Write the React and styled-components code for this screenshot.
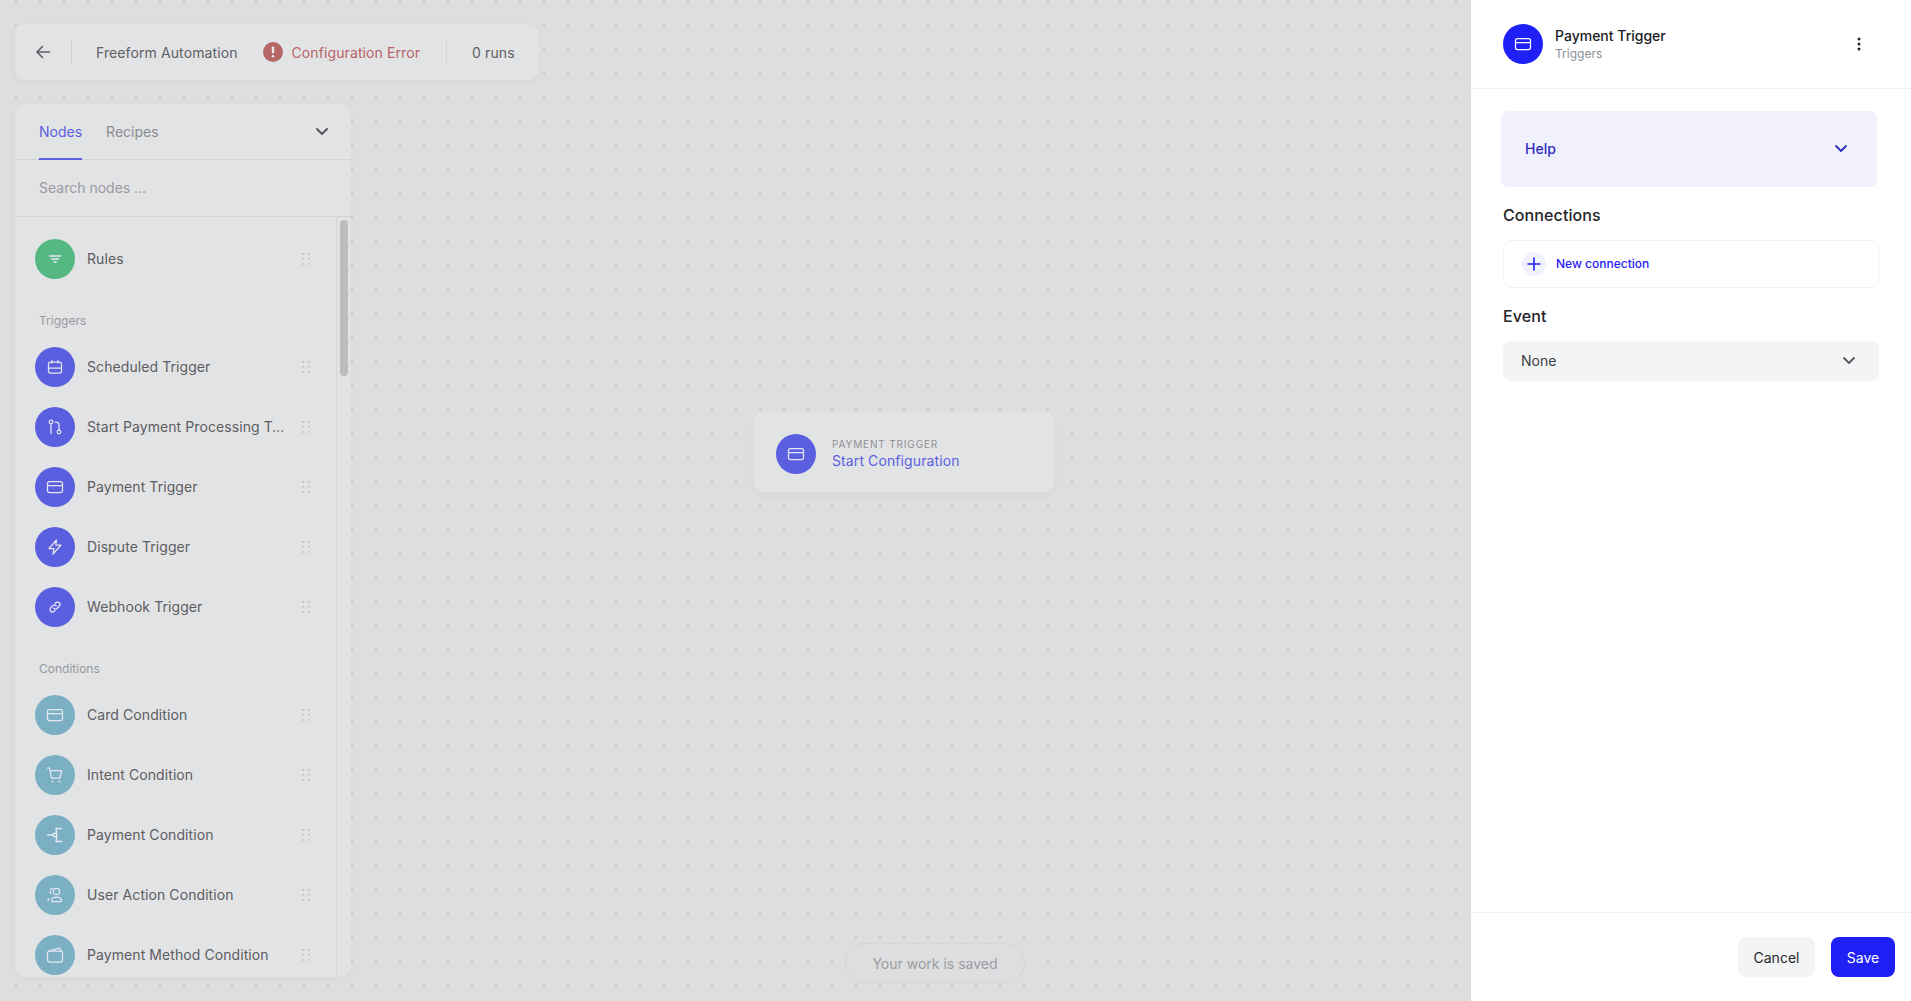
import React from "react";
import styled, { createGlobalStyle } from "styled-components";

const Global = createGlobalStyle`
  html, body { margin: 0; padding: 0; height: 100%; overflow: hidden; }
  body { font-family: Inter, "Liberation Sans", sans-serif; -webkit-font-smoothing: antialiased; }
  #root { height: 100%; }
  * { box-sizing: border-box; }
`;

const Page = styled.div`
  display: flex;
  width: 1911px;
  height: 1001px;
  overflow: hidden;
`;
const Canvas = styled.main`
  position: relative;
  width: 1471px;
  height: 100%;
  padding: 24px 15px;
  display: flex;
  flex-direction: column;
  align-items: flex-start;
  gap: 24px;
  background-color: #dddee0;
  background-image: radial-gradient(circle at center, #c6c7ca 0.8px, transparent 1.1px);
  background-size: 24px 24px;
  background-position: 4px -11px;
`;
const TopBar = styled.header`
  display: flex;
  align-items: center;
  height: 56px;
  width: 524px;
  padding: 0 0 0 18px;
  background: #e2e3e5;
  border-radius: 10px;
  box-shadow: 0 2px 8px rgba(0, 0, 0, 0.03);
  font-size: 14px;
  letter-spacing: 0.1px;
  white-space: nowrap;
  color: #5f6064;
`;
const BackButton = styled.span`
  display: flex;
  width: 20px;
  color: #5f6064;
`;
const VDivider = styled.span`
  flex: none;
  width: 1px;
  height: 24px;
  background: #d2d3d7;
  margin: ${(p) => p.$margin};
`;
const ErrorDot = styled.span`
  display: flex;
  align-items: center;
  justify-content: center;
  flex: none;
  width: 20px;
  height: 20px;
  border-radius: 50%;
  background: #b56767;
  color: #e8e8e8;
  margin: 0 9px 0 25px;
`;
const ErrorText = styled.span`
  color: #b96464;
`;
const Panel = styled.section`
  display: flex;
  flex-direction: column;
  width: 336px;
  height: 873px;
  background: #e2e3e5;
  border-radius: 10px;
  overflow: hidden;
  box-shadow: 0 2px 8px rgba(0, 0, 0, 0.03);
`;
const Tabs = styled.div`
  display: flex;
  align-items: stretch;
  height: 56px;
  flex: none;
  padding: 0 22px 0 24px;
  gap: 24px;
  border-bottom: 1px solid #d2d3d7;
`;
const Tab = styled.span`
  display: flex;
  align-items: center;
  font-size: 14px;
  height: 56px;
  color: ${(p) => (p.$active ? "#5a5fdf" : "#8a8b90")};
  border-bottom: 2px solid ${(p) => (p.$active ? "#5a5fdf" : "transparent")};
`;
const TabChevron = styled.span`
  display: flex;
  align-items: center;
  margin-left: auto;
  color: #56575b;
`;
const Search = styled.div`
  display: flex;
  align-items: center;
  height: 57px;
  flex: none;
  padding: 0 0 2px 24px;
  font-size: 14px;
  color: #999a9e;
  border-bottom: 1px solid #d2d3d7;
`;
const Body = styled.div`
  display: flex;
  flex: 1;
  min-height: 0;
`;
const List = styled.div`
  flex: 1;
  min-width: 0;
  padding-top: 12px;
  overflow: hidden;
`;
const Track = styled.div`
  flex: none;
  width: 15px;
  padding: 3px 3px 0 3px;
  border-left: 1px solid #d6d7da;
`;
const Thumb = styled.div`
  width: 8px;
  height: 156px;
  border-radius: 4px;
  background: #bcbdbf;
`;
const Row = styled.div`
  display: flex;
  align-items: center;
  height: 60px;
  padding-left: 20px;
`;
const Circle = styled.span`
  display: flex;
  align-items: center;
  justify-content: center;
  flex: none;
  width: 40px;
  height: 40px;
  border-radius: 50%;
  background: ${(p) => p.$color};
  color: ${(p) => p.$ink || "#e6e7f2"};
`;
const RowName = styled.span`
  width: 200px;
  margin-left: 12px;
  font-size: 14px;
  line-height: 20px;
  letter-spacing: 0.08px;
  color: #5c5d61;
  white-space: nowrap;
  overflow: hidden;
  text-overflow: ellipsis;
`;
const Handle = styled.span`
  display: flex;
  margin-left: 15px;
  color: #c3c4c7;
`;
const GroupLabel = styled.div`
  margin: 24px 0 8px 24px;
  height: 16px;
  font-size: 12px;
  line-height: 16px;
  color: #98999d;
`;
const Node = styled.div`
  position: absolute;
  left: 754px;
  top: 412px;
  display: flex;
  align-items: center;
  width: 300px;
  height: 80px;
  padding: 4px 0 0 22px;
  gap: 16px;
  border-radius: 10px;
  background: #e2e3e5;
  box-shadow: 0 4px 10px rgba(0, 0, 0, 0.03);
`;
const NodeText = styled.div`
  display: flex;
  flex-direction: column;
`;
const NodeLabel = styled.span`
  font-size: 10px;
  line-height: 14px;
  letter-spacing: 0.85px;
  color: #8e8f93;
  text-transform: uppercase;
`;
const NodeAction = styled.span`
  font-size: 14px;
  line-height: 20px;
  letter-spacing: 0.1px;
  color: #5a5fdf;
`;
const SavedPill = styled.div`
  position: absolute;
  left: 845px;
  top: 943px;
  display: flex;
  align-items: center;
  justify-content: center;
  width: 180px;
  height: 40px;
  border: 1px solid #d4d5d8;
  border-radius: 20px;
  background: #dddee0;
  font-size: 14px;
  color: #9b9ca1;
`;
const Side = styled.aside`
  display: flex;
  flex-direction: column;
  width: 440px;
  height: 100%;
  background: #fff;
`;
const SideHeader = styled.div`
  display: flex;
  align-items: center;
  flex: none;
  height: 89px;
  padding: 0 50px 0 32px;
  border-bottom: 1px solid #f0f0f2;
`;
const HeaderText = styled.div`
  display: flex;
  flex-direction: column;
  margin-left: 12px;
`;
const Title = styled.span`
  font-size: 14px;
  font-weight: 500;
  line-height: 20px;
  color: #1b1b1f;
`;
const Sub = styled.span`
  font-size: 12px;
  line-height: 16px;
  color: #8d9097;
`;
const Kebab = styled.span`
  display: flex;
  margin-left: auto;
  color: #26262a;
`;
const SideBody = styled.div`
  flex: 1;
  padding: 22px 32px 0;
`;
const Help = styled.div`
  display: flex;
  align-items: center;
  justify-content: space-between;
  width: 376px;
  height: 76px;
  margin-left: -2px;
  padding: 0 29px 2px 24px;
  border-radius: 8px;
  background: #f1f1fd;
  font-size: 14px;
  font-weight: 500;
  color: #2d2dbd;
`;
const SectionLabel = styled.div`
  font-size: 16px;
  font-weight: 500;
  line-height: 24px;
  letter-spacing: 0.1px;
  color: #232327;
  margin: ${(p) => p.$margin};
`;
const ConnectionBox = styled.div`
  display: flex;
  align-items: center;
  height: 48px;
  padding: 0 0 1px 18px;
  gap: 10px;
  border: 1px solid #f1f1fd;
  border-radius: 8px;
  font-size: 12px;
  font-weight: 500;
  color: #1f20f5;
`;
const PlusDot = styled.span`
  display: flex;
  align-items: center;
  justify-content: center;
  width: 24px;
  height: 24px;
  border-radius: 50%;
  background: #f1f1fd;
`;
const Select = styled.div`
  display: flex;
  align-items: center;
  justify-content: space-between;
  height: 40px;
  padding: 0 23px 2px 18px;
  border-radius: 8px;
  background: #f3f4f6;
  font-size: 14px;
  color: #3c3d42;
`;
const SelectChevron = styled.span`
  display: flex;
  color: #56575c;
`;
const Footer = styled.div`
  display: flex;
  justify-content: flex-end;
  flex: none;
  height: 89px;
  padding: 24px 16px 0 0;
  gap: 16px;
  border-top: 1px solid #f0f0f2;
`;
const Button = styled.button`
  height: 40px;
  padding: 0;
  width: ${(p) => p.$width}px;
  border: 0;
  border-radius: 8px;
  font: 400 14px Inter, "Liberation Sans", sans-serif;
  background: ${(p) => (p.$primary ? "#1f20f5" : "#f3f4f6")};
  color: ${(p) => (p.$primary ? "#fff" : "#27272b")};
`;

const Ico = ({ children, size = 20, box = 20, w = 1.25 }) => (
  <svg width={size} height={size} viewBox={`0 0 ${box} ${box}`} fill="none" stroke="currentColor" strokeWidth={w} strokeLinecap="round" strokeLinejoin="round">
    {children}
  </svg>
);
const CardIcon = () => (
  <Ico>
    <rect x="2.5" y="4.5" width="15" height="11" rx="2" />
    <path d="M2.5 8.5h15" />
  </Ico>
);
const FilterIcon = () => (
  <Ico w={1.4}>
    <path d="M4.5 7h11M6.5 10h7M8.8 13h2.4" />
  </Ico>
);
const CalendarIcon = () => (
  <Ico>
    <rect x="3.5" y="5" width="13" height="11" rx="2" />
    <path d="M3.5 11h13M7 3.5v2.5M13 3.5v2.5" />
  </Ico>
);
const FlowIcon = () => (
  <Ico>
    <circle cx="6" cy="5" r="1.8" />
    <path d="M6 6.8V16.5" />
    <circle cx="14" cy="15" r="1.8" />
    <path d="M14 13.2V8a3 3 0 0 0-3-3h-1" />
  </Ico>
);
const ZapIcon = () => (
  <Ico>
    <path d="M11.5 3 4 11.5h5l-1 5.5 8-9h-5.2z" />
  </Ico>
);
const LinkIcon = () => (
  <Ico>
    <path d="M8.8 11.2a2.4 2.4 0 0 0 3.4 0l2-2a2.4 2.4 0 0 0-3.4-3.4l-.7.7" />
    <path d="M11.2 8.8a2.4 2.4 0 0 0-3.4 0l-2 2a2.4 2.4 0 0 0 3.4 3.4l.7-.7" />
  </Ico>
);
const CartIcon = () => (
  <Ico>
    <path d="M2.5 3h2l2 10h8.5l1.7-7.5H5" />
    <path d="M7.5 16.5h.01M14.5 16.5h.01" strokeWidth="1.8" />
  </Ico>
);
const BranchIcon = () => (
  <Ico w={1.4}>
    <circle cx="10" cy="10" r="1.8" />
    <path d="M2.5 10h5.7M11 3.5h5.5M11 3.5l.7 4.9M11 16.5h5.5M11 16.5l.7-4.9" />
  </Ico>
);
const UserIcon = () => (
  <Ico>
    <circle cx="11.5" cy="6.5" r="3.2" />
    <path d="M6.5 15.6c0-2.4 2.2-3.6 5-3.6s5 1.2 5 3.6c0 .6-.4 1-1 1h-8c-.6 0-1-.4-1-1z" />
    <path d="M7.6 3.4C5.8 3.7 4.6 5.2 5 7c.2.8.6 1.4 1.2 1.8M3 16c0-1.2.5-2.2 1.4-3" strokeDasharray="2.6 1.4" />
  </Ico>
);
const WalletIcon = () => (
  <Ico>
    <rect x="2.5" y="6" width="15" height="11" rx="2.2" />
    <path d="M4 6 13.5 3.3c1.2-.3 2 .3 2.2 1.5L16 6" />
  </Ico>
);
const DragIcon = () => (
  <svg width="8" height="12" viewBox="0 0 8 12" fill="currentColor">
    {[0, 5, 10].map((y) => (
      <React.Fragment key={y}>
        <rect x="0" y={y} width="2" height="2" rx="1" />
        <rect x="6" y={y} width="2" height="2" rx="1" />
      </React.Fragment>
    ))}
  </svg>
);
const Chevron = ({ w = 1.8 }) => (
  <svg width="14" height="9" viewBox="0 0 14 9" fill="none" stroke="currentColor" strokeWidth={w} strokeLinecap="round" strokeLinejoin="round">
    <path d="M2 2l5 5 5-5" />
  </svg>
);

const PURPLE = "#5a5fdf";
const TEAL = "#7bafc4";
const triggers = [
  ["Scheduled Trigger", CalendarIcon],
  ["Start Payment Processing Trigger", FlowIcon],
  ["Payment Trigger", CardIcon],
  ["Dispute Trigger", ZapIcon],
  ["Webhook Trigger", LinkIcon],
];
const conditions = [
  ["Card Condition", CardIcon],
  ["Intent Condition", CartIcon],
  ["Payment Condition", BranchIcon],
  ["User Action Condition", UserIcon],
  ["Payment Method Condition", WalletIcon],
];

const NodeRow = ({ name, color, Icon }) => (
  <Row>
    <Circle $color={color}>
      <Icon />
    </Circle>
    <RowName>{name}</RowName>
    <Handle>
      <DragIcon />
    </Handle>
  </Row>
);

export default function App() {
  return (
    <Page>
      <Global />
      <Canvas>
        <TopBar>
          <BackButton>
            <svg width="20" height="20" viewBox="0 0 20 20" fill="none" stroke="currentColor" strokeWidth="1.6" strokeLinecap="round" strokeLinejoin="round">
              <path d="M16.5 10h-12M9.5 4.5 4 10l5.5 5.5" />
            </svg>
          </BackButton>
          <VDivider $margin="0 24px 0 18px" />
          <span>Freeform Automation</span>
          <ErrorDot>
            <svg width="4" height="12" viewBox="0 0 4 12" fill="currentColor">
              <rect x="0.8" y="0.5" width="2.4" height="7" rx="1" />
              <circle cx="2" cy="10.2" r="1.3" />
            </svg>
          </ErrorDot>
          <ErrorText>Configuration Error</ErrorText>
          <VDivider $margin="0 25px 0 26px" />
          <span>0 runs</span>
        </TopBar>
        <Panel>
          <Tabs>
            <Tab $active>Nodes</Tab>
            <Tab>Recipes</Tab>
            <TabChevron>
              <Chevron w={2} />
            </TabChevron>
          </Tabs>
          <Search>Search nodes ...</Search>
          <Body>
            <List>
              <NodeRow name="Rules" color="#55b882" Icon={FilterIcon} />
              <GroupLabel>Triggers</GroupLabel>
              {triggers.map(([name, Icon]) => (
                <NodeRow key={name} name={name} color={PURPLE} Icon={Icon} />
              ))}
              <GroupLabel>Conditions</GroupLabel>
              {conditions.map(([name, Icon]) => (
                <NodeRow key={name} name={name} color={TEAL} Icon={Icon} />
              ))}
            </List>
            <Track>
              <Thumb />
            </Track>
          </Body>
        </Panel>
        <Node>
          <Circle $color={PURPLE}>
            <CardIcon />
          </Circle>
          <NodeText>
            <NodeLabel>Payment Trigger</NodeLabel>
            <NodeAction>Start Configuration</NodeAction>
          </NodeText>
        </Node>
        <SavedPill>Your work is saved</SavedPill>
      </Canvas>
      <Side>
        <SideHeader>
          <Circle $color="#1f20f5" $ink="#fff">
            <CardIcon />
          </Circle>
          <HeaderText>
            <Title>Payment Trigger</Title>
            <Sub>Triggers</Sub>
          </HeaderText>
          <Kebab>
            <svg width="4" height="14" viewBox="0 0 4 14" fill="currentColor">
              <circle cx="2" cy="2" r="1.5" />
              <circle cx="2" cy="7" r="1.5" />
              <circle cx="2" cy="12" r="1.5" />
            </svg>
          </Kebab>
        </SideHeader>
        <SideBody>
          <Help>
            Help
            <Chevron />
          </Help>
          <SectionLabel $margin="16px 0 13px">Connections</SectionLabel>
          <ConnectionBox>
            <PlusDot>
              <svg width="14" height="14" viewBox="0 0 14 14" fill="none" stroke="#1f20f5" strokeWidth="1.6" strokeLinecap="round">
                <path d="M7 1v12M1 7h12" />
              </svg>
            </PlusDot>
            New connection
          </ConnectionBox>
          <SectionLabel $margin="16px 0 13px">Event</SectionLabel>
          <Select>
            None
            <SelectChevron>
              <Chevron />
            </SelectChevron>
          </Select>
        </SideBody>
        <Footer>
          <Button $width={77}>Cancel</Button>
          <Button $width={64} $primary>Save</Button>
        </Footer>
      </Side>
    </Page>
  );
}
